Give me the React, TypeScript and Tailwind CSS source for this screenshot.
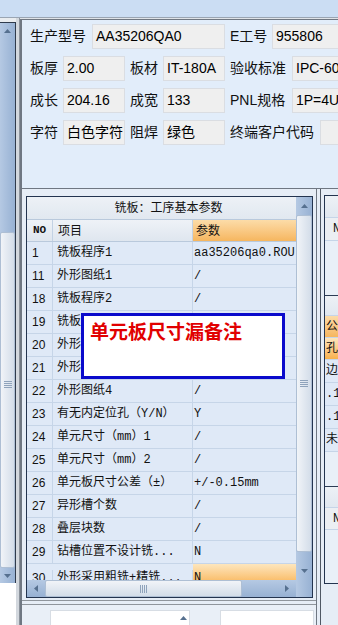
import React from 'react';

const rows: [string, string, string][] = [
  ['1', '铣板程序1', 'aa35206qa0.ROU'],
  ['11', '外形图纸1', '/'],
  ['18', '铣板程序2', '/'],
  ['19', '铣板程序3', '/'],
  ['20', '外形图纸2', '/'],
  ['21', '外形图纸3', '/'],
  ['22', '外形图纸4', '/'],
  ['23', '有无内定位孔（Y/N）', 'Y'],
  ['24', '单元尺寸（mm）1', '/'],
  ['25', '单元尺寸（mm）2', '/'],
  ['26', '单元板尺寸公差（±）', '+/-0.15mm'],
  ['27', '异形槽个数', '/'],
  ['28', '叠层块数', '/'],
  ['29', '钻槽位置不设计铣...', 'N'],
  ['30', '外形采用粗铣+精铣...', 'N'],
];

type Dir = 'up' | 'down' | 'left' | 'right';

const Tri = ({ dir }: { dir: Dir }) => {
  const vertical = dir === 'up' || dir === 'down';
  const pts = {
    up: '0,4 7,4 3.5,0',
    down: '0,0 7,0 3.5,4',
    left: '4,0 4,7 0,3.5',
    right: '0,0 0,7 4,3.5',
  }[dir];
  return (
    <svg width={vertical ? 7 : 4} height={vertical ? 4 : 7} viewBox={vertical ? '0 0 7 4' : '0 0 4 7'}>
      <polygon points={pts} fill="#56708f" />
    </svg>
  );
};

const GripH = () => (
  <div className="flex flex-col gap-[1px]">
    <div className="w-[8px] h-[1px] bg-[#8fa3bb]" />
    <div className="w-[8px] h-[1px] bg-[#8fa3bb]" />
    <div className="w-[8px] h-[1px] bg-[#8fa3bb]" />
    <div className="w-[8px] h-[1px] bg-[#8fa3bb]" />
  </div>
);

const GripV = () => (
  <div className="flex gap-[1px]">
    <div className="w-[1px] h-[8px] bg-[#8fa3bb]" />
    <div className="w-[1px] h-[8px] bg-[#8fa3bb]" />
    <div className="w-[1px] h-[8px] bg-[#8fa3bb]" />
    <div className="w-[1px] h-[8px] bg-[#8fa3bb]" />
  </div>
);

const Field = ({ w, children }: { w: string; children?: React.ReactNode }) => (
  <div className={`${w} h-[25px] shrink-0 bg-[#efefef] border border-[#dadde2] pl-[3px] flex items-center text-[14px] text-black whitespace-nowrap overflow-hidden`}>
    {children}
  </div>
);

const Label = ({ w, children }: { w: string; children: React.ReactNode }) => (
  <div className={`${w} shrink-0 pl-[5px] first:pl-0 text-[14px] text-[#111] whitespace-nowrap`}>{children}</div>
);

const InfoPanel = () => (
  <div className="mt-[1px] h-[169px] border-l-2 border-t border-[#6f7782] bg-[#e2edfa] pl-[8px] pt-[4px] flex flex-col gap-[7px] overflow-hidden">
    <div className="flex items-center h-[25px]">
      <Label w="w-[62px]">生产型号</Label>
      <Field w="w-[133px]">AA35206QA0</Field>
      <Label w="w-[47px]">E工号</Label>
      <Field w="w-[90px]">955806</Field>
    </div>
    <div className="flex items-center h-[25px]">
      <Label w="w-[33px]">板厚</Label>
      <Field w="w-[62px]">2.00</Field>
      <Label w="w-[38px]">板材</Label>
      <Field w="w-[62px]">IT-180A</Field>
      <Label w="w-[67px]">验收标准</Label>
      <Field w="w-[90px]">IPC-6012</Field>
    </div>
    <div className="flex items-center h-[25px]">
      <Label w="w-[33px]">成长</Label>
      <Field w="w-[62px]">204.16</Field>
      <Label w="w-[38px]">成宽</Label>
      <Field w="w-[62px]">133</Field>
      <Label w="w-[67px]">PNL规格</Label>
      <Field w="w-[90px]">1P=4U</Field>
    </div>
    <div className="flex items-center h-[25px]">
      <Label w="w-[33px]">字符</Label>
      <Field w="w-[62px]">白色字符</Field>
      <Label w="w-[38px]">阻焊</Label>
      <Field w="w-[62px]">绿色</Field>
      <Label w="w-[95px]">终端客户代码</Label>
      <Field w="w-[90px]" />
    </div>
  </div>
);

const ParamTable = () => (
  <div className="w-[287px] h-[402px] border border-[#23344f] flex bg-[#dfe9f7]">
    <div className="w-[269px] flex flex-col">
      <div className="h-[23px] shrink-0 border-b border-[#b9c9dc] bg-linear-to-b from-[#edf1f6] to-[#e1e8f0] flex items-center justify-center pl-[14px] text-[12px] text-[#111]">
        铣板：工序基本参数
      </div>
      <div className="h-[22px] shrink-0 flex border-b border-[#b9c9dc] text-[12px] text-[#111]">
        <div className="w-[26px] border-r border-[#c3d2e4] bg-linear-to-b from-[#eef2f7] to-[#dfe6ef] flex items-center justify-center text-[11px] font-bold [font-family:Liberation_Mono,monospace]">NO</div>
        <div className="w-[140px] border-r border-[#c3d2e4] bg-linear-to-b from-[#eef2f7] to-[#dfe6ef] flex items-center pl-[5px]">项目</div>
        <div className="flex-1 bg-linear-to-b from-[#fcdca8] to-[#f6b65e] flex items-center pl-[3px]">参数</div>
      </div>
      <div className="h-[338px] shrink-0 overflow-hidden">
        {rows.map(([no, item, val], i) => (
          <div key={no} className={`h-[23px] flex border-b border-[#c6d5e8] text-[12px] text-[#111] ${i === rows.length - 1 ? 'pt-[6px]' : ''}`}>
            <div className="w-[26px] shrink-0 border-r border-[#c6d5e8] flex items-center pl-[5px] text-[12px] [font-family:Liberation_Sans,sans-serif]">{no}</div>
            <div className="w-[140px] shrink-0 border-r border-[#c6d5e8] flex items-center pl-[4px] whitespace-nowrap overflow-hidden [font-family:Liberation_Mono,Noto_Sans_CJK_SC,monospace]">{item}</div>
            <div className={`flex-1 flex items-center pl-[1px] whitespace-nowrap overflow-hidden [font-family:Liberation_Mono,Noto_Sans_CJK_SC,monospace] ${i === rows.length - 1 ? 'bg-linear-to-b from-[#fde6bd] to-[#f8b14a] -mt-[6px] pt-[6px]' : ''}`}>{val}</div>
          </div>
        ))}
      </div>
      <div className="h-[17px] shrink-0 flex bg-linear-to-b from-[#b5c9e3] to-[#97b1d3]">
        <div className="w-[18px] flex items-center justify-center"><Tri dir="left" /></div>
        <div className="w-[197px] bg-linear-to-b from-[#f1f4f8] to-[#d3dde9] border border-[#aebfd4] rounded-[2px] flex items-center justify-center"><GripV /></div>
        <div className="w-[36px]" />
        <div className="w-[18px] flex items-center justify-center"><Tri dir="right" /></div>
      </div>
    </div>
    <div className="w-[16px] flex flex-col bg-linear-to-r from-[#b5c9e3] to-[#97b1d3]">
      <div className="h-[18px] flex items-center justify-center"><Tri dir="up" /></div>
      <div className="h-[337px] bg-linear-to-r from-[#f1f4f8] to-[#d3dde9] border border-[#aebfd4] rounded-[2px] flex items-center justify-center"><GripH /></div>
      <div className="h-[10px]" />
      <div className="h-[18px] flex items-center justify-center"><Tri dir="down" /></div>
      <div className="h-[17px]" />
    </div>
  </div>
);

const RCell = ({ h, bg, children, pl = 'pl-[1px]' }: { h: string; bg: string; children?: React.ReactNode; pl?: string }) => (
  <div className={`${h} ${bg} ${pl} shrink-0 border-b border-[#c6d5e8] flex items-center text-[12px] text-[#111] whitespace-nowrap [font-family:Liberation_Mono,Noto_Sans_CJK_SC,monospace]`}>
    {children}
  </div>
);

const RightPanel = () => (
  <div className="mt-[6px] h-[389px] w-[120px] border border-[#23344f] bg-[#e9f0f8] flex flex-col">
    <RCell h="h-[22px]" bg="bg-linear-to-b from-[#edf1f6] to-[#e1e8f0]" />
    <RCell h="h-[23px]" bg="bg-[#eceff3]" pl="pl-[8px]">NO</RCell>
    <div className="h-[55px] shrink-0 border-b border-[#2c3c55]" />
    <RCell h="h-[20px]" bg="bg-linear-to-b from-[#edf1f6] to-[#e1e8f0]" />
    <RCell h="h-[22px]" bg="bg-linear-to-b from-[#fcdca8] to-[#f6b65e]">公差</RCell>
    <RCell h="h-[22px]" bg="bg-linear-to-b from-[#fde6bd] to-[#f8b14a]">孔径</RCell>
    <RCell h="h-[23px]" bg="bg-[#dfe9f7]">边距</RCell>
    <RCell h="h-[23px]" bg="bg-[#dfe9f7]">.1</RCell>
    <RCell h="h-[23px]" bg="bg-[#dfe9f7]">.1</RCell>
    <RCell h="h-[23px]" bg="bg-[#dfe9f7]">未注</RCell>
    <div className="h-[35px] shrink-0 border-b border-[#2c3c55]" />
    <RCell h="h-[21px]" bg="bg-linear-to-b from-[#edf1f6] to-[#e1e8f0]" />
    <RCell h="h-[22px]" bg="bg-[#eceff3]" pl="pl-[8px]">NO</RCell>
    <div className="flex-1" />
  </div>
);

export default function App() {
  return (
    <div className="relative w-[338px] h-[625px] overflow-hidden bg-[#dfe3e8] flex flex-col [font-family:Liberation_Sans,Noto_Sans_CJK_SC,sans-serif]">
      <div className="h-[18px] shrink-0 bg-[#cbddf3] border-b border-[#9aa5b3]" />
      <div className="flex-1 flex min-h-0">
        {/* left scroll strip */}
        <div className="w-[16px] shrink-0 flex flex-col pt-[4px] bg-[#e9ecef]">
          <div className="h-[561px] shrink-0 border-t border-r border-[#2f3b4c] flex flex-col bg-linear-to-r from-[#b5c9e3] to-[#97b1d3]">
            <div className="h-[16px] flex items-center justify-center"><Tri dir="up" /></div>
            <div className="h-[193px]" />
            <div className="h-[336px] bg-linear-to-r from-[#f1f4f8] to-[#d3dde9] border border-[#aebfd4] rounded-[2px] flex flex-col items-center pt-[148px]"><GripH /></div>
            <div className="flex-1 flex items-center justify-center"><Tri dir="down" /></div>
          </div>
          <div className="flex-1 bg-white" />
        </div>
        <div className="w-[4px] shrink-0 bg-[#d3d8de] border-r border-[#8c939c]" />
        {/* main */}
        <div className="flex-1 flex flex-col min-w-0">
          <InfoPanel />
          <div className="flex-1 flex border-t border-[#6f7782] bg-[#e6edf6] min-h-0">
            <div className="w-[297px] shrink-0 flex flex-col border-l-2 border-r border-[#6f7782]">
              <div className="pl-[4px] pt-[7px]">
                <ParamTable />
              </div>
              <div className="mt-[2px] border-t border-[#8f959c] pt-[3px] flex-1 flex flex-col">
                <div className="flex-1 border-t border-[#8f959c] bg-[#e9eff7] pt-[5px] flex">
                  <div className="ml-[28px] w-[140px] h-[20px] bg-white border border-[#d7dde4] flex justify-end pt-[5px] pr-[2px]">
                    <Tri dir="up" />
                  </div>
                  <div className="ml-[30px] w-[94px] h-[20px] bg-white border border-[#d7dde4]" />
                </div>
              </div>
            </div>
            <div className="flex-1 pl-[3px] overflow-hidden">
              <div className="h-full border-l border-[#4f5864] pl-[3px] overflow-hidden bg-[#e6edf6]">
                <RightPanel />
              </div>
            </div>
          </div>
        </div>
      </div>
      {/* warning popup over the grid */}
      <div className="absolute left-[81px] top-[313px] w-[204px] h-[66px] border-[3px] border-[#0a0acc] bg-white pl-[6px] pt-[3px]">
        <span className="text-[19px] font-bold text-[#e10000] leading-[24px] [font-family:Noto_Sans_CJK_SC,sans-serif]">单元板尺寸漏备注</span>
      </div>
    </div>
  );
}
